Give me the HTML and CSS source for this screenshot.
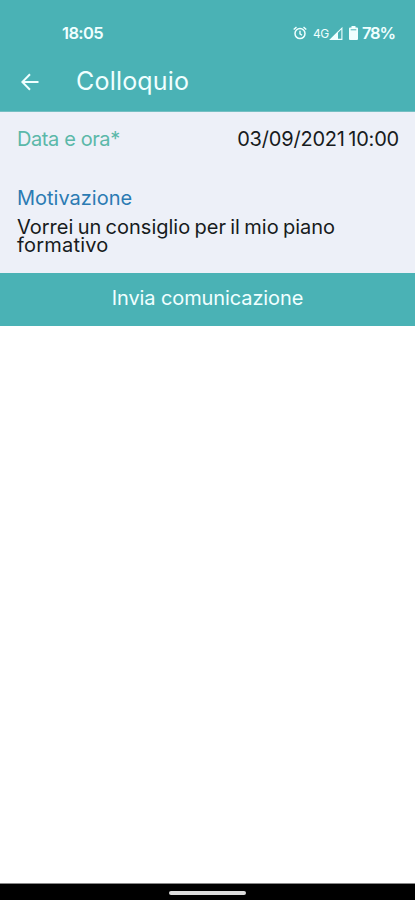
FILE: index.html
```html
<!DOCTYPE html>
<html lang="it">
<head>
<meta charset="utf-8">
<title>Colloquio</title>
<link rel="stylesheet" href="styles.css">
</head>
<body>
<header class="top">
  <div class="status">
    <span class="clock">18:05</span>
    <div class="indicators">
      <svg class="alarm" viewBox="0 0 14 14" fill="none" stroke="currentColor"><circle cx="7" cy="7.6" r="5" stroke-width="1.5"/><path d="M.7 3.500 3.500 1.100M13.300 3.500 10.500 1.100M7 4.700v3.100l2 1.500" stroke-width="1.400"/></svg>
      <span class="network">4G</span>
      <svg class="signal" viewBox="0 0 14 13"><path d="M12.900 1.200v11.200H1.600z" fill="none" stroke="currentColor" stroke-width="1.100"/><path d="M.5 13 9 4.500V13z" fill="currentColor"/></svg>
      <svg class="battery" viewBox="0 0 9 14"><path d="M2.500 0h4v1.500H8q1 0 1 1V13q0 1-1 1H1q-1 0-1-1V2.500q0-1 1-1h1.500z" fill="currentColor"/><path d="M1.700 3.800h5.600" stroke="#4ab2b5"/></svg>
      <span class="percent">78%</span>
    </div>
  </div>
  <div class="bar">
    <svg class="back" viewBox="0 0 18 18" fill="none" stroke="currentColor" stroke-width="2"><path d="M17.500 9H1.500M9 1.200 1.300 9 9 16.800"/></svg>
    <h1 class="title">Colloquio</h1>
  </div>
</header>
<main>
  <section class="form">
    <div class="row"><span class="date-label">Data e ora*</span><span class="date">03/09/2021<span class="time">10:00</span></span></div>
    <div class="reason-label">Motivazione</div>
    <p class="reason">Vorrei un consiglio per il mio piano<br><span class="last">formativo</span></p>
  </section>
  <button class="send">Invia comunicazione</button>
</main>
<footer class="nav"><span class="handle"></span></footer>
</body>
</html>
```
FILE: styles.css
```css
* { box-sizing: border-box; }
body {
  margin: 0;
  height: 900px;
  display: flex;
  flex-direction: column;
  background: #fff;
  color: #171b20;
  font: 20px/24px Inter, sans-serif;
  overflow: hidden;
}
svg { display: block; flex: none; }
main { flex: 1; }
.top {
  height: 112px;
  padding-top: 22px;
  background: #4ab2b5;
  border-bottom: 1px solid #75bfc3;
  color: #f0ffff;
}
.status {
  display: flex;
  justify-content: space-between;
  height: 22px;
  padding: 0 20px 0 62px;
  font-size: 16.5px;
  line-height: 23px;
  font-weight: 600;
}
.clock { letter-spacing: -0.6px; }
.indicators { display: flex; align-items: center; }
.alarm { width: 14px; height: 14px; margin-right: 6px; }
.network { width: 15px; font-size: 12px; font-weight: 400; letter-spacing: -0.6px; }
.signal { width: 14px; height: 13px; margin: 0 6px 0 1px; }
.battery { width: 9px; height: 14px; margin-right: 4px; }
.percent { width: 33px; letter-spacing: -1.2px; }
.bar {
  display: flex;
  align-items: center;
  height: 40px;
  margin-top: 18px;
  padding-left: 21px;
}
.back { width: 18px; height: 18px; margin-right: 37px; }
.title { margin: -2px 0 0; font-size: 25px; line-height: 30px; font-weight: 400; letter-spacing: 0.2px; }
.form { height: 161px; padding: 15px 16px 0 17px; background: #edf0f8; }
.row { display: flex; justify-content: space-between; height: 59px; }
.date-label { color: #5bb8a9; letter-spacing: -0.4px; }
.date { letter-spacing: -0.2px; }
.time { margin-left: 3.5px; }
.reason-label { color: #2b7bb3; }
.reason { margin: 8px 0 0; line-height: 18px; white-space: nowrap; word-spacing: -1.3px; }
.last { letter-spacing: 0.2px; }
.send {
  display: block;
  width: 100%;
  height: 52.5px;
  padding: 0 0 2px;
  border: 0;
  background: #4ab2b5;
  color: #f0ffff;
  font: inherit;
  letter-spacing: -0.1px;
}
.nav {
  display: flex;
  justify-content: center;
  height: 17px;
  padding-top: 7px;
  background: #000;
  border-top: 1px solid #888;
}
.handle { width: 77px; height: 4px; border-radius: 2px; background: #ddd; }
```
